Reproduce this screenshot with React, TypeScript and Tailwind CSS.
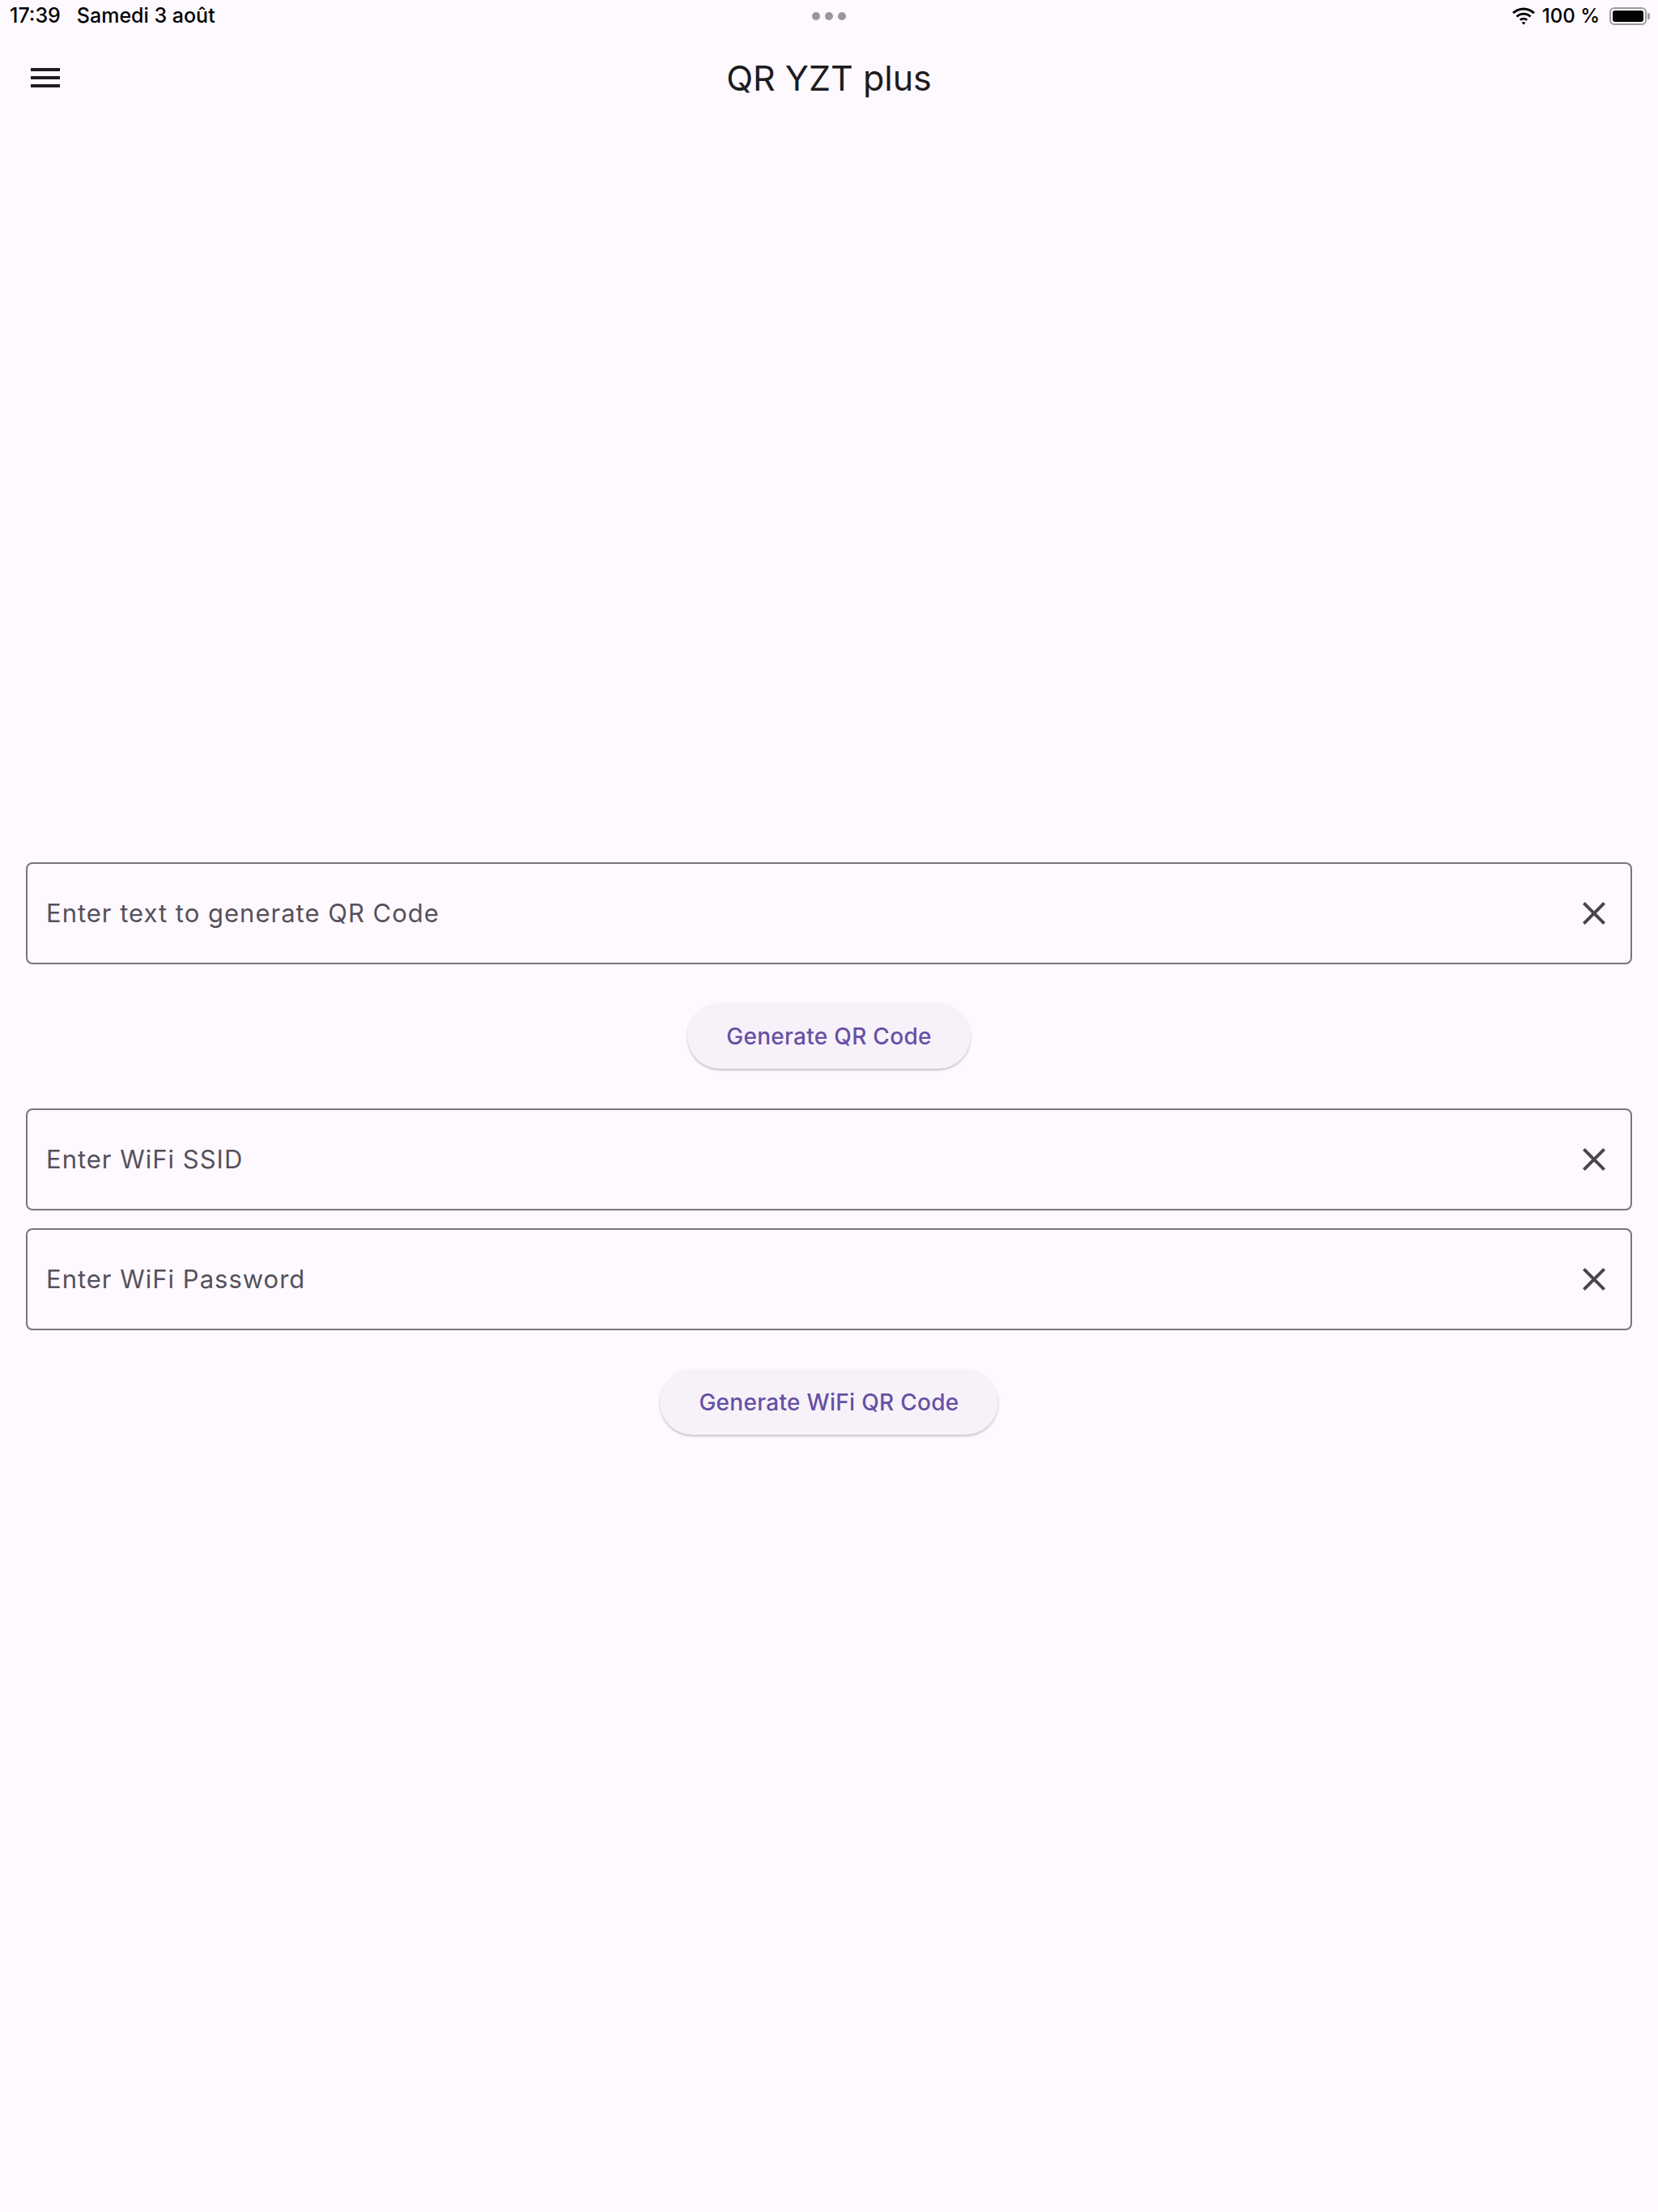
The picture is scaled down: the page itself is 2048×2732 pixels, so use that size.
import React, { useState } from 'react';

const font = { fontFamily: 'Inter, "Noto Sans", sans-serif' };

const CloseIcon = () => (
  <svg width="48" height="48" viewBox="0 0 24 24" fill="#49454F">
    <path d="M19 6.41 17.59 5 12 10.59 6.41 5 5 6.41 10.59 12 5 17.59 6.41 19 12 13.41 17.59 19 19 17.59 13.41 12z" />
  </svg>
);

const MenuIcon = () => (
  <svg width="48" height="48" viewBox="0 0 24 24" fill="#1D1B20">
    <path d="M3 18h18v-2H3v2zm0-5h18v-2H3v2zm0-7v2h18V6H3z" />
  </svg>
);

const WifiIcon = () => (
  <svg width="30" height="22" viewBox="0 0 30 22" fill="#000">
    <path d="M15 3.5c4.6 0 8.8 1.8 11.9 4.7l2-2.1C25.3 2.7 20.4.6 15 .6S4.7 2.7 1.1 6.1l2 2.1C6.2 5.3 10.4 3.5 15 3.5z" />
    <path d="M15 9.6c2.9 0 5.5 1.1 7.5 2.9l2-2.1c-2.5-2.3-5.8-3.7-9.5-3.7s-7 1.4-9.5 3.7l2 2.1c2-1.8 4.6-2.9 7.5-2.9z" />
    <path d="M15 15.6c1.3 0 2.4.5 3.2 1.2l2-2.1c-1.4-1.3-3.2-2-5.2-2s-3.8.7-5.2 2l2 2.1c.8-.7 1.900-1.2 3.2-1.2z" />
    <path d="M15 21.4l2.4-2.5c-.6-.6-1.5-.9-2.4-.9s-1.8.3-2.4.9z" />
  </svg>
);

const Field = ({ placeholder }: { placeholder: string }) => {
  const [value, setValue] = useState('');
  return (
    <div className="flex h-[126px] items-center rounded-[8px] border-2 border-[#79747E] pl-[23px] pr-[21px]">
      <input
        value={value}
        onChange={(e) => setValue(e.target.value)}
        placeholder={placeholder}
        className="flex-1 bg-transparent text-[31px] tracking-[1px] text-[#1D1B20] outline-none placeholder:text-[#55515B]"
        style={font}
      />
      <button onClick={() => setValue('')} aria-label="Clear" className="flex h-[48px] w-[48px] items-center justify-center">
        <CloseIcon />
      </button>
    </div>
  );
};

const PillButton = ({ label }: { label: string }) => (
  <div className="flex justify-center">
    <button
      className="h-[81px] rounded-full bg-[#F7F2FA] px-[48px] text-[28px] font-medium tracking-[0.3px] text-[#6750A4] shadow-[0_2px_3px_rgba(0,0,0,0.22)]"
      style={font}
    >
      {label}
    </button>
  </div>
);

export default function App() {
  return (
    <div className="min-h-[2732px] w-full bg-[#FEF9FF]" style={font}>
      {/* Status bar */}
      <div className="relative flex h-[40px] items-center justify-between pl-[12px] pr-[10px] text-[25px] text-black">
        <div className="flex items-center gap-[20px]">
          <span className="font-medium">17:39</span>
          <span className="font-medium">Samedi 3 août</span>
        </div>
        <div className="absolute left-1/2 top-[15px] flex -translate-x-1/2 gap-[6px]">
          <span className="h-[10px] w-[10px] rounded-full bg-[#99969C]" />
          <span className="h-[10px] w-[10px] rounded-full bg-[#99969C]" />
          <span className="h-[10px] w-[10px] rounded-full bg-[#99969C]" />
        </div>
        <div className="flex items-center gap-[8px] text-[24px]">
          <WifiIcon />
          <span className="font-medium">100 %</span>
          <div className="ml-[4px] flex items-center">
            <div className="flex h-[22px] w-[46px] items-center rounded-[6px] border-2 border-[#9c9c9c] p-[2px]">
              <div className="h-full w-full rounded-[3px] bg-black" />
            </div>
            <div className="ml-[1px] h-[8px] w-[3px] rounded-r-[2px] bg-[#9c9c9c]" />
          </div>
        </div>
      </div>

      {/* App bar */}
      <div className="relative flex h-[112px] items-center justify-center">
        <button className="absolute left-[32px] top-[32px] flex h-[48px] w-[48px] items-center justify-center" aria-label="Menu">
          <MenuIcon />
        </button>
        <h1 className="text-[43px] text-[#1D1B20]">QR YZT plus</h1>
      </div>

      {/* Content */}
      <div className="px-[32px] pt-[913px]">
        <Field placeholder="Enter text to generate QR Code" />
        <div className="mt-[48px]">
          <PillButton label="Generate QR Code" />
        </div>
        <div className="mt-[49px] flex flex-col gap-[22px]">
          <Field placeholder="Enter WiFi SSID" />
          <Field placeholder="Enter WiFi Password" />
        </div>
        <div className="mt-[48px]">
          <PillButton label="Generate WiFi QR Code" />
        </div>
      </div>
    </div>
  );
}
